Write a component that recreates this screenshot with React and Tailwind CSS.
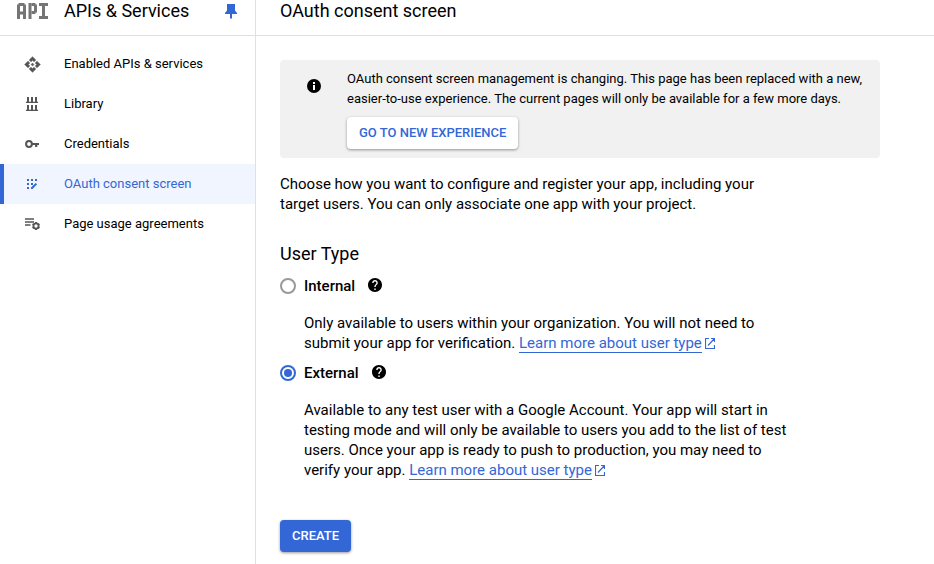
import { MdHelp } from 'react-icons/md';

function EnabledApisIcon() {
  return (
    <svg width="17" height="17" viewBox="0 0 24 24" fill="currentColor" stroke="currentColor" strokeWidth="0.800" className="shrink-0">
      <path d="M14 12l-2 2-2-2 2-2 2 2zm-2-6l2.120 2.120 2.500-2.500L12 1 7.380 5.620l2.500 2.500L12 6zm-6 6l2.120-2.120-2.500-2.500L1 12l4.620 4.620 2.500-2.500L6 12zm12 0l-2.120 2.120 2.500 2.500L23 12l-4.620-4.620-2.500 2.500L18 12zm-6 6l-2.120-2.120-2.500 2.500L12 23l4.620-4.620-2.500-2.500L12 18z" />
    </svg>
  );
}

function LibraryIcon() {
  return (
    <svg width="12" height="14" viewBox="0 0 12 14" fill="currentColor">
      <path d="M1 0h2v4.800h2V0h2v4.800h2V0h2v4.800h1V6H0V4.800h1zM1 8h2v4.800h2V8h2v4.800h2V8h2v4.800h1V14H0v-1.200h1z" />
    </svg>
  );
}

function KeyIcon() {
  return (
    <svg width="14" height="8" viewBox="0 0 14 8" fill="none" stroke="currentColor">
      <circle cx="4" cy="4" r="2.900" strokeWidth="2" />
      <path d="M7 4h7M11.200 4v3" strokeWidth="2.200" />
    </svg>
  );
}

function ConsentIcon() {
  return (
    <svg width="12" height="12" viewBox="0 0 12 12" fill="currentColor">
      <path d="M1 1h2v2H1zM5 1h2v2H5zM9 1h2v2H9zM1 5h2v2H1zM5 5h2v2H5zM1 9h2v2H1zM5 11V9.500L9.700 5l1.400 1.200L6.500 11z" />
    </svg>
  );
}

function AgreementsIcon() {
  return (
    <svg width="16" height="14" viewBox="0 0 16 14" fill="none" stroke="currentColor" strokeWidth="1.500" className="shrink-0">
      <path d="M1 2h9M1 5h9M1 8h5.500" />
      <circle cx="12" cy="9" r="2.600" strokeWidth="1.800" />
      <path d="M12 5v1.600M12 11.400V13M8.540 7l1.400.8M14.060 10.200l1.400.8M15.460 7l-1.400.8M9.940 10.200l-1.400.8" strokeWidth="1.800" />
    </svg>
  );
}

function InfoIcon() {
  return (
    <svg width="14" height="14" viewBox="0 0 14 14" className="ml-[27px] mr-[26px] mt-[10px] shrink-0">
      <circle cx="7" cy="7" r="7" />
      <path d="M6 3h2v2H6zM6 6h2v5H6z" fill="#fff" />
    </svg>
  );
}

function PinIcon() {
  return (
    <svg width="12" height="15" viewBox="0 0 12 15" fill="#3367d6" className="ml-auto">
      <path d="M2 0h8v6.500L12 9v1H7v4l-1 1-1-1v-4H0V9l2-2.500z" />
    </svg>
  );
}

function ApiLogo() {
  return (
    <svg width="32" height="17" viewBox="0 0 32 17" fill="#757575" className="shrink-0">
      <rect x="0" y="1.500" width="3" height="14.500" />
      <rect x="1.500" y="0" width="6" height="3" />
      <rect x="6" y="1.500" width="3" height="14.500" />
      <rect x="3" y="8.500" width="3" height="3" />
      <rect x="11.500" y="0" width="3" height="16" />
      <rect x="14.500" y="0" width="4" height="3" />
      <rect x="17" y="1.500" width="3" height="8" />
      <rect x="14.500" y="8" width="4" height="3" />
      <rect x="22" y="0" width="9" height="3" />
      <rect x="25" y="3" width="3" height="10" />
      <rect x="22" y="13" width="9" height="3" />
    </svg>
  );
}

function NavItem({ icon, label, active }) {
  return (
    <a
      className={`flex h-10 items-center border-l-4 text-[13px] ${
        active ? 'border-[#3367d6] bg-[#f0f5ff] text-[#3367d6]' : 'border-transparent text-black'
      }`}
    >
      <span className={`ml-5 mr-6 flex w-4 justify-center ${active ? '' : 'text-[#555555]'}`}>{icon}</span>
      {label}
    </a>
  );
}

function LearnMore() {
  return (
    <>
      <a className="border-b border-[#3367d6] text-[#3367d6]">Learn more about user type</a>
      <svg className="ml-[3px] inline-block align-[-1px] text-[#3367d6]" width="10" height="11" viewBox="0 0 10 11" fill="none" stroke="currentColor" strokeWidth="1.150">
        <path d="M4 .5H.5v10h9V7M6 .5h3.500V4M9.500.5L3 7.500" />
      </svg>
    </>
  );
}

function Option({ label, checked, children }) {
  return (
    <div>
      <div className="flex h-5 items-center text-[15px] font-medium">
        <span className={`mr-2 flex size-4 items-center justify-center rounded-full border-2 ${checked ? 'border-[#3367d6]' : 'border-[#999999]'}`}>
          {checked && <span className="size-2 rounded-full bg-[#3367d6]" />}
        </span>
        {label}
        <MdHelp size={14} viewBox="2 2 20 20" className="mb-0.5 ml-[13px]" />
      </div>
      <p className="ml-6 mt-[17px] text-[15px] leading-5">{children}</p>
    </div>
  );
}

export default function App() {
  return (
    <div className="flex h-[564px] w-[934px] overflow-hidden bg-white font-['Roboto',sans-serif] text-black">
      <aside className="w-64 shrink-0 border-r border-[#e0e0e0]">
        <header className="flex h-9 items-start border-b border-[#e0e0e0] pl-[17px] pr-[18px]">
          <div className="flex h-[22px] w-full items-center">
            <div className="pt-px"><ApiLogo /></div>
            <h2 className="ml-[15px] text-[18px] leading-[22px]">APIs &amp; Services</h2>
            <PinIcon />
          </div>
        </header>
        <nav className="pt-2">
          <NavItem icon={<EnabledApisIcon />} label="Enabled APIs & services" />
          <NavItem icon={<LibraryIcon />} label="Library" />
          <NavItem icon={<KeyIcon />} label="Credentials" />
          <NavItem icon={<ConsentIcon />} label="OAuth consent screen" active />
          <NavItem icon={<AgreementsIcon />} label="Page usage agreements" />
        </nav>
      </aside>
      <main className="flex-1">
        <header className="h-9 border-b border-[#e0e0e0] pl-6">
          <h1 className="text-[18px] leading-[22px]">OAuth consent screen</h1>
        </header>
        <div className="pl-6 pt-6">
          <section className="flex h-[98px] w-[600px] rounded bg-[#f1f1f1] pt-[9px]">
            <InfoIcon />
            <div className="text-[13px] leading-5">
              <p>
                OAuth consent screen management is changing. This page has been replaced with a new,
                <br />
                easier-to-use experience. The current pages will only be available for a few more days.
              </p>
              <button className="mt-2 h-8 rounded bg-white px-3 font-medium text-[#3367d6] shadow-[0_1px_3px_rgba(0,0,0,0.4)]">
                GO TO NEW EXPERIENCE
              </button>
            </div>
          </section>
          <p className="mt-4 text-[15px] leading-5">
            Choose how you want to configure and register your app, including your
            <br />
            target users. You can only associate one app with your project.
          </p>
          <h2 className="mt-7 text-[18px] leading-6">User Type</h2>
          <div className="mt-2.5 flex flex-col gap-2.5">
            <Option label="Internal">
              Only available to users within your organization. You will not need to
              <br />
              submit your app for verification. <LearnMore />
            </Option>
            <Option label="External" checked>
              Available to any test user with a Google Account. Your app will start in
              <br />
              testing mode and will only be available to users you add to the list of test
              <br />
              users. Once your app is ready to push to production, you may need to
              <br />
              verify your app. <LearnMore />
            </Option>
          </div>
          <button className="mt-10 h-8 rounded bg-[#3367d6] px-3 text-[13px] font-medium text-white shadow-[0_1px_3px_rgba(0,0,0,0.4)]">
            CREATE
          </button>
        </div>
      </main>
    </div>
  );
}
